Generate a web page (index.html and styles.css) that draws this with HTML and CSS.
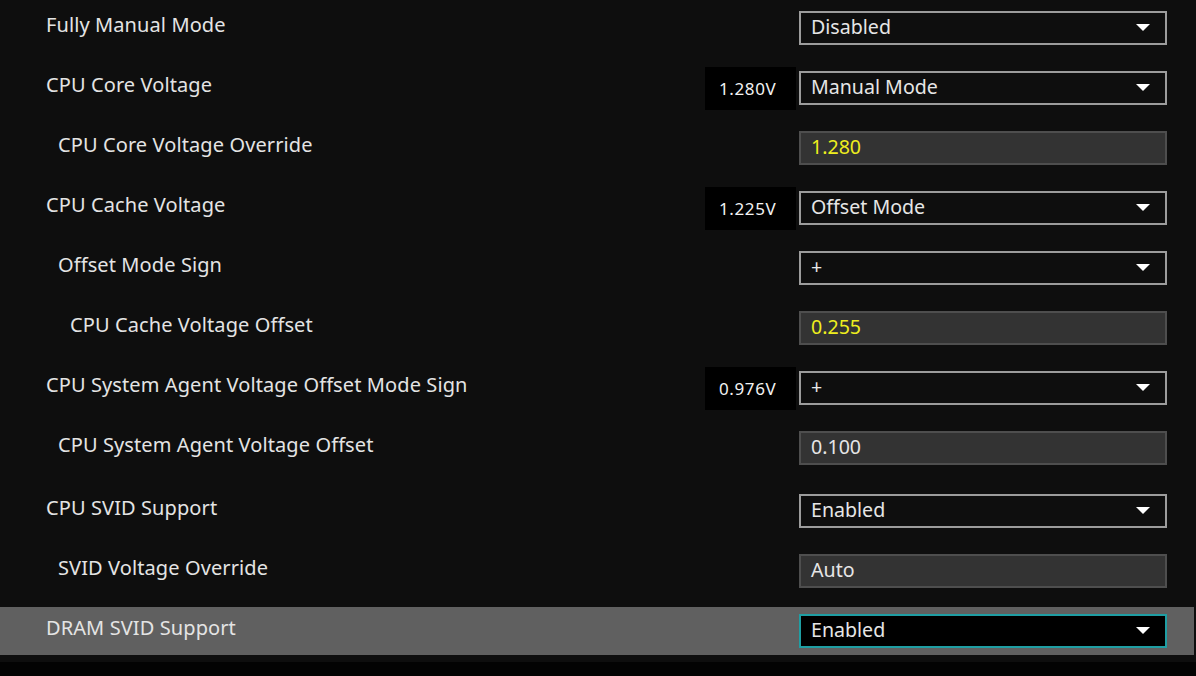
FILE: index.html
```html
<!DOCTYPE html>
<html>
<head>
<meta charset="utf-8">
<link rel="stylesheet" href="styles.css">
</head>
<body>
<div class="page">
  <div class="list">
    <div class="row">
      <div class="label l0">Fully Manual Mode</div>
      <div class="right">
        <div class="select"><span>Disabled</span><i class="arrow"></i></div>
      </div>
    </div>
    <div class="row">
      <div class="label l0">CPU Core Voltage</div>
      <div class="right">
        <div class="badge">1.280V</div>
        <div class="select"><span>Manual Mode</span><i class="arrow"></i></div>
      </div>
    </div>
    <div class="row">
      <div class="label l1">CPU Core Voltage Override</div>
      <div class="right">
        <div class="field yellow">1.280</div>
      </div>
    </div>
    <div class="row">
      <div class="label l0">CPU Cache Voltage</div>
      <div class="right">
        <div class="badge">1.225V</div>
        <div class="select"><span>Offset Mode</span><i class="arrow"></i></div>
      </div>
    </div>
    <div class="row">
      <div class="label l1">Offset Mode Sign</div>
      <div class="right">
        <div class="select"><span>+</span><i class="arrow"></i></div>
      </div>
    </div>
    <div class="row">
      <div class="label l2">CPU Cache Voltage Offset</div>
      <div class="right">
        <div class="field yellow">0.255</div>
      </div>
    </div>
    <div class="row">
      <div class="label l0">CPU System Agent Voltage Offset Mode Sign</div>
      <div class="right">
        <div class="badge">0.976V</div>
        <div class="select"><span>+</span><i class="arrow"></i></div>
      </div>
    </div>
    <div class="row">
      <div class="label l1">CPU System Agent Voltage Offset</div>
      <div class="right">
        <div class="field">0.100</div>
      </div>
    </div>
    <div class="row group">
      <div class="label l0">CPU SVID Support</div>
      <div class="right">
        <div class="select"><span>Enabled</span><i class="arrow"></i></div>
      </div>
    </div>
    <div class="row">
      <div class="label l1">SVID Voltage Override</div>
      <div class="right">
        <div class="field">Auto</div>
      </div>
    </div>
    <div class="row active">
      <div class="label l0">DRAM SVID Support</div>
      <div class="right">
        <div class="select focus"><span>Enabled</span><i class="arrow"></i></div>
      </div>
    </div>
  </div>
  <div class="footer"></div>
</div>
</body>
</html>
```
FILE: styles.css
```css
* { box-sizing: border-box; }
html, body {
  margin: 0;
  padding: 0;
  background: #0e0e0e;
}
body {
  font-family: "Noto Sans", "Open Sans", sans-serif;
  color: #e2e2e2;
  width: 1196px;
  height: 676px;
  overflow: hidden;
}
.page {
  display: flex;
  flex-direction: column;
  height: 676px;
}
.list {
  display: flex;
  flex-direction: column;
}
.row {
  display: flex;
  align-items: flex-start;
  height: 60px;
  padding-top: 11px;
  width: 1194px;
}
.row.group { margin-top: 3px; }
.row.active {
  margin-top: 4px;
  height: 48px;
  padding-top: 7px;
  background: #606060;
}
.label {
  flex: 1;
  font-size: 20px;
  line-height: 28px;
  letter-spacing: 0.1px;
  white-space: nowrap;
  color: #e4e4e4;
}
.l0 { padding-left: 46px; }
.l1 { padding-left: 58px; }
.l2 { padding-left: 70px; }
.right {
  display: flex;
  align-items: center;
  justify-content: flex-end;
  gap: 3px;
  height: 34px;
  margin-right: 27px;
}
.badge {
  width: 91px;
  height: 43px;
  background: #000;
  color: #f2f2f2;
  font-size: 17px;
  line-height: 43px;
  letter-spacing: 0.6px;
  padding-left: 14px;
  white-space: nowrap;
}
.select, .field {
  width: 368px;
  height: 34px;
  border: 2px solid #9c9c9c;
  background: #0e0e0e;
  display: flex;
  align-items: center;
  padding-left: 10px;
  padding-right: 15px;
  padding-bottom: 3px;
  font-size: 19.6px;
  color: #e6e6e6;
}
.select span { flex: 1; }
.arrow {
  width: 0;
  height: 0;
  border-left: 7px solid transparent;
  border-right: 7px solid transparent;
  border-top: 7px solid #ffffff;
  margin-top: 1px;
}
.field {
  background: #333333;
  border-color: #4e4e4e;
}
.field.yellow { color: #eeee1e; }
.select.focus {
  background: #000;
  border-color: #1f9ea3;
}
.footer {
  margin-top: 7px;
  flex: 1;
  background: #030303;
}
```
